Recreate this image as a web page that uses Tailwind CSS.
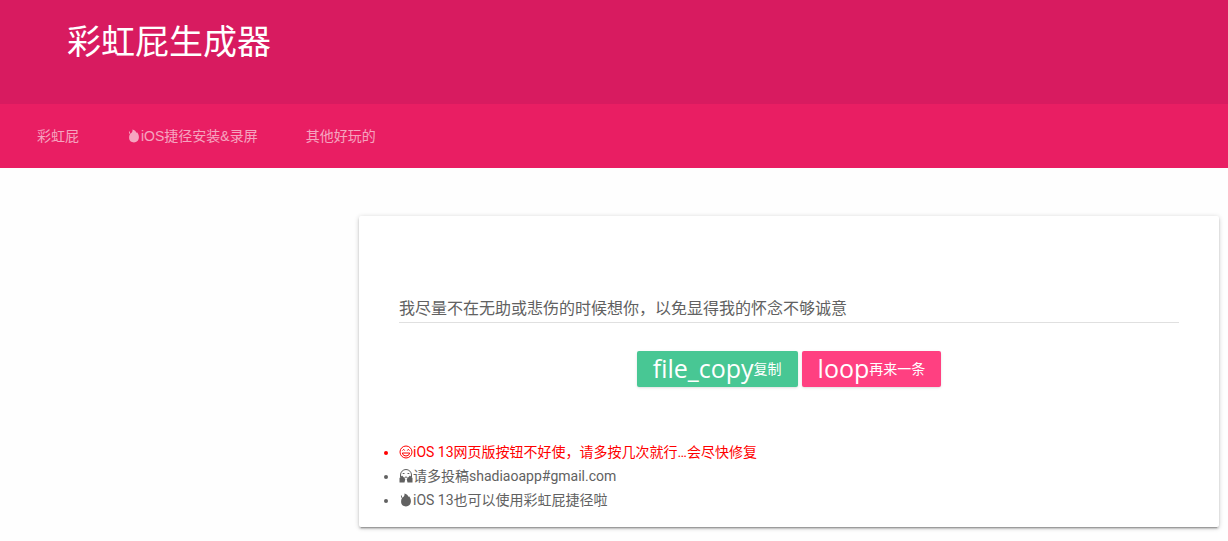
<!DOCTYPE html>
<html lang="zh-CN">

<head>
    <meta charset="UTF-8">
    <meta name="viewport" content="width=device-width, initial-scale=1.0">
    <script src="https://cdn.jsdelivr.net/npm/@tailwindcss/browser@4"></script>
    <title>彩虹屁生成器</title>
</head>

<body class="min-h-screen bg-[#fefefe] font-['Roboto','Noto_Sans_CJK_SC',sans-serif] text-sm text-[#616161]">
    <!-- shared icon shapes -->
    <svg class="hidden">
        <symbol id="fire" viewBox="0 0 14 14">
            <path fill="currentColor" d="M5.400 0.400C7.600 0.900 9 2.200 9.500 4C9.800 3.700 10 3.300 9.900 2.900C11.200 4.300 11.900 6.200 11.900 8.300C11.900 11.300 9.800 13.400 7 13.400C4.200 13.400 2.100 11.500 2.100 8.700C2.100 7 2.600 5.800 3.300 4.600C4.800 4 6 2.300 5.400 0.400Z" />
            <path fill="currentColor" d="M2 2C3.100 2.800 3.300 3.900 2.800 5.200C2.100 4.300 1.800 3.200 2 2Z" />
        </symbol>
    </svg>

    <header>
        <div class="h-26 bg-[#d81b60] pl-[67px] pt-5">
            <h1 class="text-[34px] leading-11 text-white">彩虹屁生成器</h1>
        </div>
        <nav class="flex h-16 items-center bg-[#e91e63] pl-[13px] font-['Liberation_Sans','Noto_Sans_CJK_SC',sans-serif] text-white/60">
            <a href="#" class="px-6">彩虹屁</a>
            <a href="#" class="flex items-center px-6"><svg class="size-3.5"><use href="#fire" /></svg>iOS捷径安装&amp;录屏</a>
            <a href="#" class="px-6">其他好玩的</a>
        </nav>
    </header>

    <main class="flex justify-end pt-12 pr-[9px] pb-3">
        <section class="w-[860px] rounded-xs bg-white px-10 pt-20 pb-[15px] shadow-[0_2px_2px_0_rgba(0,0,0,0.14),0_3px_1px_-2px_rgba(0,0,0,0.2),0_1px_5px_0_rgba(0,0,0,0.2)]">
            <input type="text" aria-label="彩虹屁" value="我尽量不在无助或悲伤的时候想你，以免显得我的怀念不够诚意"
                class="block h-[27px] w-full border-b border-black/12 pb-1 text-base leading-6 focus:outline-none">

            <div class="mt-7 flex justify-center gap-1 text-white">
                <button class="flex h-9 items-center rounded-xs bg-[#48c794] px-4 shadow-sm"><span class="font-['Open_Sans',sans-serif] text-[25px]">file_copy</span>复制</button>
                <button class="flex h-9 items-center rounded-xs bg-[#ff4081] px-4 shadow-sm"><span class="font-['Open_Sans',sans-serif] text-[25px]">loop</span>再来一条</button>
            </div>

            <ul class="mt-[53px] list-outside list-disc leading-6">
                <li class="h-6 text-[#ff0000]">
                    <svg class="inline size-3.5 align-[-2px]" viewBox="0 0 14 14" fill="none" stroke="currentColor">
                        <circle cx="7" cy="7" r="6" />
                        <path d="M3.500 5.600L4.700 4.300L5.700 5.600M8.300 5.600L9.300 4.300L10.500 5.600M3.300 8H10.700Q10.200 11 7 11Q3.800 11 3.300 8Z" />
                    </svg>iOS 13网页版按钮不好使，请多按几次就行…会尽快修复
                </li>
                <li class="h-6">
                    <svg class="inline size-3.5 align-[-2px]" viewBox="0 0 14 14" fill="none" stroke="currentColor">
                        <path d="M1.500 8V6A5.500 5.500 0 0 1 12.500 6V8M3.700 4.500H5.500M8.500 4.500H10.300M5.500 8.500Q7 7.500 8.500 8.500" />
                        <path fill="currentColor" stroke="none" d="M0.500 13.500V9L3 6.500L6.300 10L5.500 13.500ZM13.500 13.500V9L11 6.500L7.700 10L8.500 13.500Z" />
                    </svg>请多投稿shadiaoapp#gmail.com
                </li>
                <li class="h-6"><svg class="inline size-3.5 align-[-2px]"><use href="#fire" /></svg>iOS 13也可以使用彩虹屁捷径啦</li>
            </ul>
        </section>
    </main>
</body>

</html>
